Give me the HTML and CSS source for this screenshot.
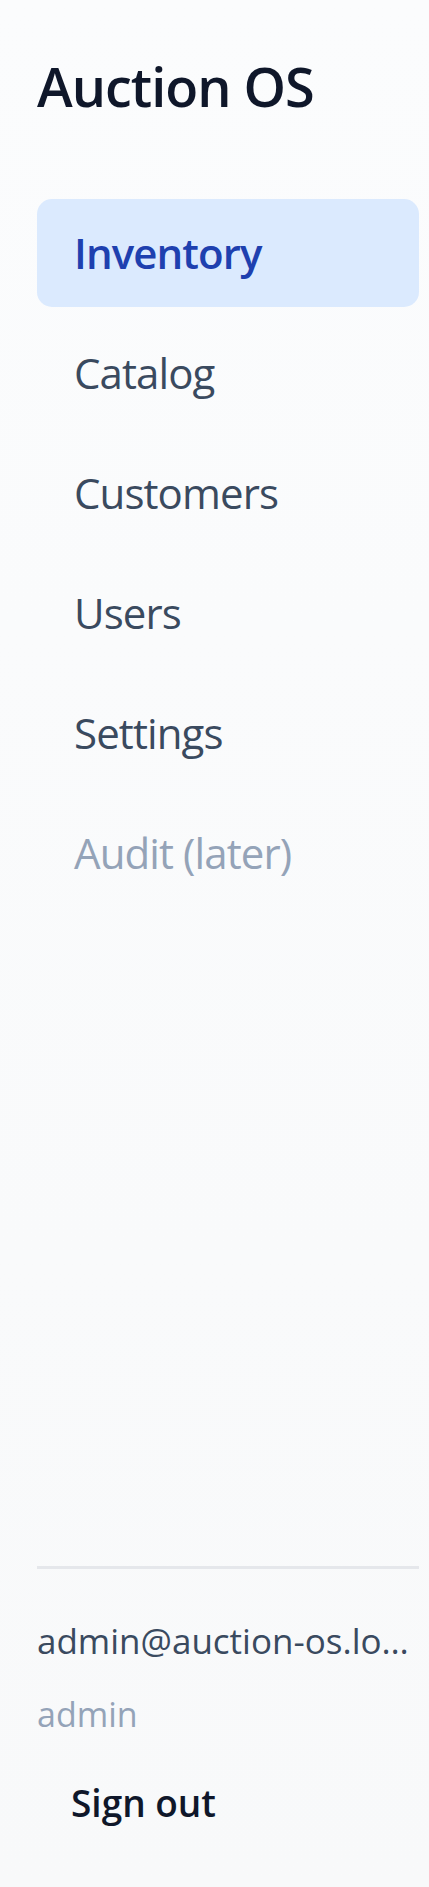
FILE: index.html
```html
<!DOCTYPE html>
<html lang="en">
<head>
<meta charset="utf-8">
<title>Auction OS</title>
<link rel="stylesheet" href="styles.css">
</head>
<body>
<aside class="sidebar">
  <h1 class="brand">Auction OS</h1>
  <nav class="nav">
    <a class="nav-item active" href="#">Inventory</a>
    <a class="nav-item" href="#">Catalog</a>
    <a class="nav-item" href="#">Customers</a>
    <a class="nav-item" href="#">Users</a>
    <a class="nav-item" href="#">Settings</a>
    <span class="nav-item disabled">Audit (later)</span>
  </nav>
  <div class="footer">
    <div class="email">admin@auction-os.local</div>
    <div class="role">admin</div>
    <button class="signout" type="button">Sign out</button>
  </div>
</aside>
</body>
</html>
```
FILE: styles.css
```css
html, body {
  margin: 0;
  padding: 0;
}
body {
  font-family: "Open Sans", "Noto Sans", sans-serif;
  background: linear-gradient(#fbfcfd, #f8f9fa);
  color: #3a4a5f;
}
.sidebar {
  box-sizing: border-box;
  height: 1887px;
  display: flex;
  flex-direction: column;
  padding: 46px 10px 45px 37px;
}
.brand {
  margin: 0;
  font-size: 54px;
  line-height: 80px;
  font-weight: 600;
  color: #0f172a;
  letter-spacing: -1px;
}
.nav {
  margin-top: 73px;
  display: flex;
  flex-direction: column;
  gap: 12px;
}
.nav-item {
  display: block;
  height: 108px;
  line-height: 108px;
  padding: 0 37px;
  border-radius: 15px;
  font-size: 42px;
  letter-spacing: -0.9px;
  color: #3a4a5f;
  text-decoration: none;
}
.nav-item.active {
  background: #dbeafe;
  color: #1e40af;
  font-weight: 600;
}
.nav-item.disabled {
  color: #94a3b8;
}
.footer {
  margin-top: auto;
  border-top: 3px solid #e5e7eb;
  padding-top: 47px;
}
.email {
  font-size: 35px;
  line-height: 50px;
  color: #3a4a5f;
  white-space: nowrap;
  overflow: hidden;
  text-overflow: ellipsis;
}
.role {
  margin-top: 23px;
  font-size: 34px;
  line-height: 50px;
  color: #94a3b8;
}
.signout {
  display: block;
  margin-top: 25px;
  padding: 14px 34px;
  border: 0;
  background: transparent;
  font-family: inherit;
  font-size: 37px;
  line-height: 50px;
  font-weight: 600;
  color: #0f172a;
  cursor: pointer;
}
```
